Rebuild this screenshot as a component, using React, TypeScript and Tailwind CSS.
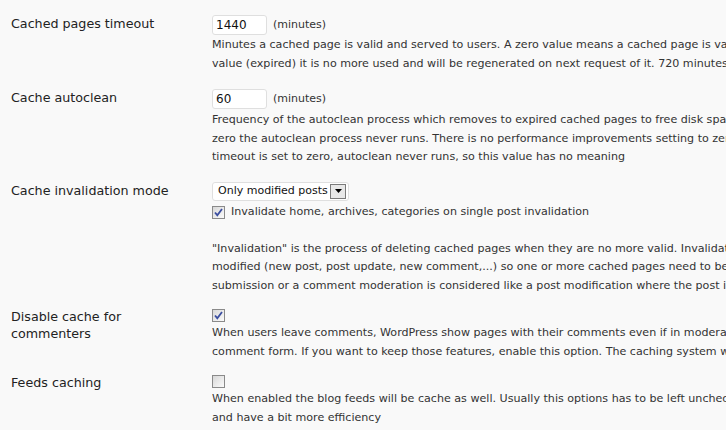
import React from 'react';

const font = { fontFamily: '"DejaVu Sans", Verdana, sans-serif' };

function Check({ checked }: { checked: boolean }) {
  return (
    <span className="inline-flex h-[13px] w-[13px] items-center justify-center border border-[#8a8a8a] bg-gradient-to-br from-[#d8d8d8] to-[#fbfbfb]">
      {checked && (
        <svg width="9" height="9" viewBox="0 0 9 9">
          <path d="M1 4.5 L3.3 7.2 L8 1" fill="none" stroke="#3b4ea0" strokeWidth="1.8" />
        </svg>
      )}
    </span>
  );
}

function MinutesInput({ value }: { value: string }) {
  return (
    <div className="flex h-[20px] items-center">
      <div className="flex h-[20px] w-[55px] items-center rounded-[3px] border border-[#dfdfdf] bg-white pl-[3px] text-[12px] text-[#111]">
        {value}
      </div>
      <span className="ml-[6px] text-[11px] text-[#333]">(minutes)</span>
    </div>
  );
}

function Desc({ children, className = '' }: { children: React.ReactNode; className?: string }) {
  return (
    <p className={`whitespace-nowrap text-[11.1px] leading-[18.5px] text-[#333] ${className}`}>{children}</p>
  );
}

const label = 'w-[212px] shrink-0 pl-[11px] text-[12.7px] text-[#222]';

export default function App() {
  return (
    <div className="h-[430px] w-[726px] overflow-hidden bg-[#f9f9f9]" style={font}>
      {/* Cached pages timeout */}
      <div className="flex pt-[15px]">
        <div className={`${label} leading-[18px]`}>Cached pages timeout</div>
        <div className="min-w-0 flex-1 overflow-hidden">
          <MinutesInput value="1440" />
          <Desc className="mt-[1px]">
            Minutes a cached page is valid and served to users. A zero value means a cached page is valid forever. If a cached page is older than the specified
            <br />
            value (expired) it is no more used and will be regenerated on next request of it. 720 minutes is half a day, 1440 is a full day and so on.
          </Desc>
        </div>
      </div>

      {/* Cache autoclean */}
      <div className="flex pt-[16px]">
        <div className={`${label} leading-[18px]`}>Cache autoclean</div>
        <div className="min-w-0 flex-1 overflow-hidden">
          <MinutesInput value="60" />
          <Desc className="mt-[2px]">
            Frequency of the autoclean process which removes to expired cached pages to free disk space. If set to
            <br />
            zero the autoclean process never runs. There is no performance improvements setting to zero this value. If cache
            <br />
            timeout is set to zero, autoclean never runs, so this value has no meaning
          </Desc>
        </div>
      </div>

      {/* Cache invalidation mode */}
      <div className="flex pt-[15px]">
        <div className={`${label} leading-[18px]`}>Cache invalidation mode</div>
        <div className="min-w-0 flex-1 overflow-hidden">
          <div className="flex h-[19px] w-[137px] items-center justify-between rounded-[3px] border border-[#dfdfdf] bg-white pl-[5px] pr-[2px] text-[11px] text-[#111]">
            <span>Only modified posts</span>
            <span className="flex h-[15px] w-[16px] items-center justify-center border border-[#7a7a7a] bg-[#e8e8e8]">
              <svg width="7" height="4" viewBox="0 0 7 4">
                <path d="M0 0 H7 L3.5 4 Z" fill="#000" />
              </svg>
            </span>
          </div>
          <div className="mt-[3px] flex h-[18px] items-center">
            <Check checked />
            <span className="ml-[6px] text-[11.1px] text-[#333]">Invalidate home, archives, categories on single post invalidation</span>
          </div>
          <Desc className="mt-[18px]">
            "Invalidation" is the process of deleting cached pages when they are no more valid. Invalidation occurs when a blog entry is
            <br />
            modified (new post, post update, new comment,...) so one or more cached pages need to be refreshed. A comment
            <br />
            submission or a comment moderation is considered like a post modification where the post is the one the comment
          </Desc>
        </div>
      </div>

      {/* Disable cache for commenters */}
      <div className="flex pt-[12px]">
        <div className={`${label} pt-[1px] leading-[17px]`}>
          Disable cache for
          <br />
          commenters
        </div>
        <div className="min-w-0 flex-1 overflow-hidden">
          <div className="flex h-[17px] items-center">
            <Check checked />
          </div>
          <Desc>
            When users leave comments, WordPress show pages with their comments even if in moderation (and not visible to others)
            <br />
            comment form. If you want to keep those features, enable this option. The caching system will be less efficient
          </Desc>
        </div>
      </div>

      {/* Feeds caching */}
      <div className="flex pt-[12px]">
        <div className={`${label} pt-[1px] leading-[17px]`}>Feeds caching</div>
        <div className="min-w-0 flex-1 overflow-hidden">
          <div className="flex h-[17px] items-center">
            <Check checked={false} />
          </div>
          <Desc>
            When enabled the blog feeds will be cache as well. Usually this options has to be left unchecked but, if your blog is rather static,
            <br />
            and have a bit more efficiency
          </Desc>
        </div>
      </div>
    </div>
  );
}
